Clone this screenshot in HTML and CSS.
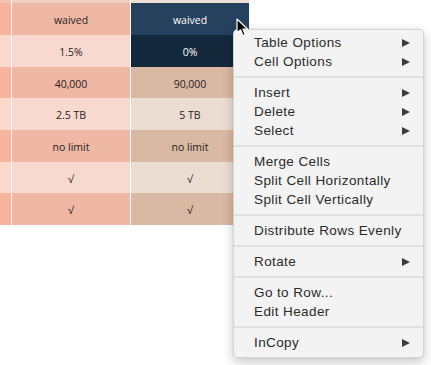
FILE: index.html
```html
<!DOCTYPE html>
<html>
<head>
<meta charset="utf-8">
<link rel="stylesheet" href="styles.css">
</head>
<body>
<div class="stage">
  <div class="table">
    <div class="c c0 top"></div><div class="c c1 top"></div><div class="c c2 top"></div>

    <div class="c c0 odd"></div><div class="c c1 odd">waived</div><div class="c c2 head">waived</div>
    <div class="c c0 even"></div><div class="c c1 even">1.5%</div><div class="c c2 dark">0%</div>
    <div class="c c0 odd"></div><div class="c c1 odd">40,000</div><div class="c c2 odd">90,000</div>
    <div class="c c0 even"></div><div class="c c1 even">2.5 TB</div><div class="c c2 even">5 TB</div>
    <div class="c c0 odd"></div><div class="c c1 odd">no limit</div><div class="c c2 odd">no limit</div>
    <div class="c c0 even"></div><div class="c c1 even">√</div><div class="c c2 even">√</div>
    <div class="c c0 odd"></div><div class="c c1 odd">√</div><div class="c c2 odd">√</div>
  </div>

  <svg class="cursor" width="13" height="19" viewBox="0 0 13 19">
    <path d="M1 1 L1 15 L4.5 11.8 L7 17.5 L9.3 16.5 L6.9 11 L11.5 11 Z" fill="#000" stroke="#fff" stroke-width="1.2" stroke-linejoin="round"/>
  </svg>

  <div class="menu">
    <div class="item">Table Options<span class="arrow"></span></div>
    <div class="item">Cell Options<span class="arrow"></span></div>
    <div class="sep"></div>
    <div class="item">Insert<span class="arrow"></span></div>
    <div class="item">Delete<span class="arrow"></span></div>
    <div class="item">Select<span class="arrow"></span></div>
    <div class="sep"></div>
    <div class="item">Merge Cells</div>
    <div class="item">Split Cell Horizontally</div>
    <div class="item">Split Cell Vertically</div>
    <div class="sep"></div>
    <div class="item">Distribute Rows Evenly</div>
    <div class="sep"></div>
    <div class="item">Rotate<span class="arrow"></span></div>
    <div class="sep"></div>
    <div class="item">Go to Row...</div>
    <div class="item">Edit Header</div>
    <div class="sep"></div>
    <div class="item">InCopy<span class="arrow"></span></div>
  </div>
</div>
</body>
</html>
```

FILE: styles.css
```css
* { box-sizing: border-box; }
html, body { margin: 0; padding: 0; background: #fff; }
.stage {
  position: relative;
  width: 431px;
  height: 365px;
  overflow: hidden;
  background: #fff;
}
.table {
  display: grid;
  grid-template-columns: 11px 118px 118px;
  grid-template-rows: 3px 32px 32px 31px 32px 32px 31px 32px;
  column-gap: 1px;
  width: 249px;
  font-family: "Open Sans", "Lato", sans-serif;
  font-size: 10.5px;
  color: #262222;
}
.c {
  display: flex;
  align-items: center;
  justify-content: center;
  padding-top: 2px;
}
.top.c0 { background: #f3c3b2; }
.top.c1 { background: #f0cfc2; }
.top.c2 { background: #ede0d5; }
.c0.odd { background: #f7b59e; }
.c0.even { background: #fbd8cc; }
.c1.odd { background: #efb8a5; }
.c1.even { background: #f8d9cf; }
.c2.odd { background: #dab9a4; }
.c2.even { background: #ecddd3; }
.c2.head { background: #25415d; color: #fff; }
.c2.dark { background: #13283b; color: #fff; }

.cursor {
  position: absolute;
  left: 236px;
  top: 18px;
  z-index: 3;
}

.menu {
  position: absolute;
  left: 233px;
  top: 29px;
  width: 191px;
  padding: 3px 0 5px;
  background: #f3f3f3;
  border: 1px solid rgba(0,0,0,0.12);
  border-radius: 5px;
  box-shadow: 0 4px 12px rgba(0,0,0,0.22), 0 0 2px rgba(0,0,0,0.08);
  font-family: "Liberation Sans", Arial, sans-serif;
  font-size: 13.5px;
  letter-spacing: 0.4px;
  color: #2a2a2a;
  z-index: 2;
}
.item {
  height: 19px;
  line-height: 19px;
  padding: 0 12px 0 20px;
  display: flex;
  align-items: center;
  justify-content: space-between;
}
.arrow {
  width: 0;
  height: 0;
  border-left: 8px solid #3c3c3c;
  border-top: 4.5px solid transparent;
  border-bottom: 4.5px solid transparent;
  margin-right: 1px;
}
.sep {
  height: 2px;
  margin: 5px 0;
  background: #e0e0e0;
}
```
